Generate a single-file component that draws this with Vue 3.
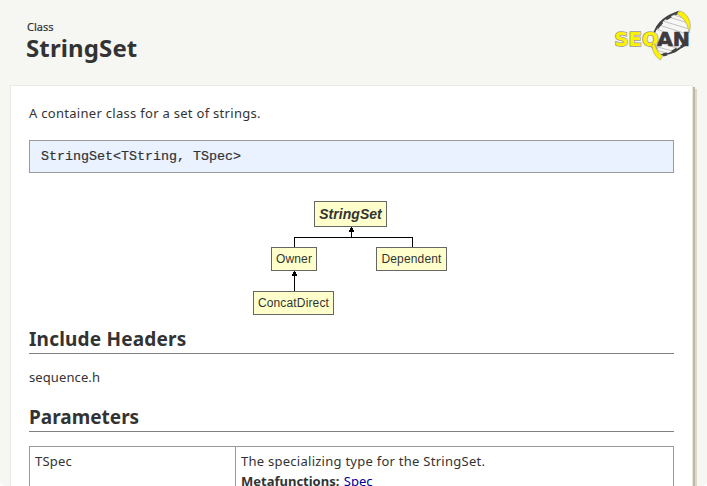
<script setup>
const nodes = [
  { label: 'StringSet', cls: 'root' },
  { label: 'Owner', cls: 'owner' },
  { label: 'Dependent', cls: 'dependent' },
  { label: 'ConcatDirect', cls: 'concat' },
]
</script>

<template>
  <div class="page">
    <header class="header">
      <div>
        <div class="kind">Class</div>
        <h1>StringSet</h1>
      </div>
      <svg class="logo" width="82" height="56" viewBox="0 0 82 56">
        <path d="M44 24C48 14 58 6 70 4L79 17L77 32C72 40 63 46 52 47L44 40Z" fill="#f7f7f5" />
        <path d="M49 17L77 26M53 13L79 21M59 9L78 15M64 7L76 11M46 21L58 25M44 38L66 44M46 42L60 46M47 34L70 41" stroke="#c2c2c2" stroke-width="1" />
        <path d="M44 25C48 15 57 7 70 4M51 47C62 46 71 41 76 34" fill="none" stroke="#444" stroke-width="1.8" />
        <path d="M47 20L52 14M56 11L61 8M65 6L69 4M53 47L57 46M62 44L67 41M71 39L75 36" stroke="#444" stroke-width="3" />
        <path d="M69 3C77 4 83 14 79 25C78 16 74 10 67 6Z" fill="#fff200" stroke="#999" stroke-width=".6" />
        <text x="4.500" y="38" class="seq" textLength="44" lengthAdjust="spacingAndGlyphs">SEQ</text>
        <path d="M42 36C42 43 45 49 50.500 52L52.500 47.500C48 45 46 41 45 36Z" fill="#fff200" stroke="#999" stroke-width=".6" />
        <text x="47" y="38" class="an" textLength="33" lengthAdjust="spacingAndGlyphs">AN</text>
      </svg>
    </header>

    <main class="card">
      <p class="summary">A container class for a set of strings.</p>
      <pre class="signature">StringSet&lt;TString, TSpec&gt;</pre>

      <div class="diagram">
        <svg class="links" width="195" height="114" shape-rendering="crispEdges">
          <path d="M41.500 46V36.500H159.500V46M98.500 36V30M41.500 90V74" fill="none" stroke="#000" />
          <path d="M98 25h1v2h1v2h1v2h-5v-2h1v-2h1zM41 69h1v2h1v2h1v2h-5v-2h1v-2h1z" fill="#000" />
        </svg>
        <div v-for="n in nodes" :key="n.label" class="node" :class="n.cls">{{ n.label }}</div>
      </div>

      <h2 class="headers">Include Headers</h2>
      <p class="include">sequence.h</p>
      <h2>Parameters</h2>

      <div class="params">
        <div class="cell name">TSpec</div>
        <div class="cell">
          <div class="desc">The specializing type for the StringSet.</div>
          <div><b>Metafunctions:</b> <a>Spec</a></div>
        </div>
      </div>
    </main>
  </div>
</template>

<style>
body { background: #fff; overflow: hidden; }
</style>

<style scoped>
.page {
  box-sizing: border-box;
  width: 707px;
  height: 486px;
  overflow: hidden;
  padding: 0 14px 0 10px;
  background: #f6f7f2;
  border-radius: 0 0 5px 5px;
  color: #333;
  font: 13px/20px "Noto Sans", sans-serif;
}
.header {
  display: flex;
  justify-content: space-between;
  height: 85px;
  padding-left: 16px;
  box-sizing: border-box;
}
.kind { margin: 19px 0 0 1px; font-size: 11px; line-height: 15px; -webkit-text-stroke: 0.2px #333; }
h1 { margin: 0; font-size: 24px; line-height: 28px; font-weight: 700; letter-spacing: 0.12px; }
.logo { margin: 8px 1px 0 0; }
.seq, .an { font: 700 19.5px "DejaVu Sans", sans-serif; }
.seq { fill: #fff200; stroke: #999; stroke-width: 1.6px; paint-order: stroke; }
.an { fill: #3f3b3c; stroke: #3f3b3c; stroke-width: .7px; }
.card {
  box-sizing: border-box;
  height: 440px;
  padding: 16px 18px 0;
  background: #fff;
  border: 1px solid #e9e9e6;
  box-shadow: 2px 2px #c1b8a1, 4px 4px #ddd8ca;
}
p { margin: 0; }
.summary { line-height: 22px; letter-spacing: 0.29px; }
.signature {
  margin: 16px 0 0;
  padding: 0 11px;
  height: 31px;
  line-height: 31px;
  border: 1px solid #999;
  background: #ebf2ff;
  font-family: "Liberation Mono", monospace;
  font-size: 13.33px;
  -webkit-text-stroke: 0.2px #333;
}
.diagram { position: relative; width: 195px; height: 114px; margin: 28px 0 0 224px; }
.links { position: absolute; inset: 0; }
.node {
  position: absolute;
  box-sizing: border-box;
  height: 24px;
  border: 1px solid #666;
  background: #ffffcc;
  font: 12px/22px "Liberation Sans", sans-serif;
  letter-spacing: 0.15px;
  text-align: center;
  white-space: nowrap;
}
.root { left: 61px; top: 0; width: 73px; height: 26px; font-size: 14px; font-weight: 700; font-style: italic; line-height: 24px; letter-spacing: 0.05px; }
.owner { left: 18px; top: 46px; width: 46px; }
.dependent { left: 123px; top: 46px; width: 71px; }
.concat { left: 0; top: 90px; width: 81px; }
h2 { margin: 10px 0 0; height: 28px; line-height: 28px; font-size: 19px; font-weight: 700; border-bottom: 1px solid #808080; }
.headers { letter-spacing: 0.2px; }
.include { margin-top: 13px; line-height: 20px; letter-spacing: 0.1px; }
.include + h2 { margin-top: 16px; }
.params { display: grid; grid-template-columns: 206px 1fr; margin-top: 14px; height: 60px; border: 1px solid #999; }
.cell { padding: 4px 5px; }
.desc { letter-spacing: 0.26px; }
.name { border-right: 1px solid #999; letter-spacing: 0.2px; }
a { color: #000099; text-decoration: underline; margin-left: 1px; }
</style>
